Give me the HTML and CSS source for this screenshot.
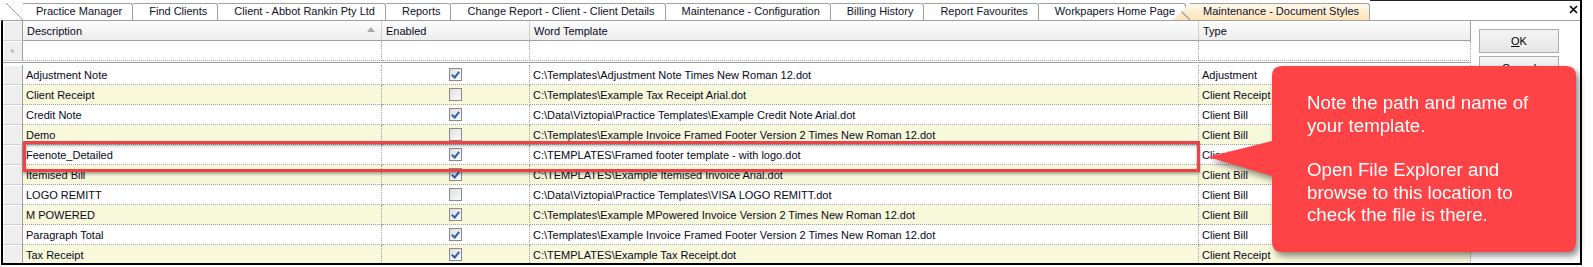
FILE: index.html
```html
<!DOCTYPE html>
<html>
<head>
<meta charset="utf-8">
<link rel="stylesheet" href="styles.css">
</head>
<body>
<div class="window">
  <div class="tabstrip">
    <div class="tab first">Practice Manager</div>
    <div class="tab">Find Clients</div>
    <div class="tab">Client - Abbot Rankin Pty Ltd</div>
    <div class="tab">Reports</div>
    <div class="tab">Change Report - Client - Client Details</div>
    <div class="tab">Maintenance - Configuration</div>
    <div class="tab">Billing History</div>
    <div class="tab">Report Favourites</div>
    <div class="tab">Workpapers Home Page</div>
    <div class="tab active">Maintenance - Document Styles</div>
    <div class="filler">
      <svg class="close" width="9" height="9" viewBox="0 0 9 9"><path d="M1 1L8 8M8 1L1 8" stroke="#000" stroke-width="1.6"/></svg>
    </div>
  </div>
  <div class="panel">
    <div class="grid">
      <div class="hdr">
        <div class="hc rh"></div>
        <div class="hc sort"><span>Description</span><svg width="8" height="5" viewBox="0 0 8 5"><path d="M0 5L4 0L8 5Z" fill="#a9a9a9"/></svg></div>
        <div class="hc">Enabled</div>
        <div class="hc">Word Template</div>
        <div class="hc last">Type</div>
      </div>
      <div class="row newrow">
        <div class="rh star">*</div>
        <div class="cell"></div>
        <div class="cell"></div>
        <div class="cell"></div>
        <div class="cell"></div>
      </div>
      <div class="spacer"></div>
      <div class="row">
        <div class="rh"></div>
        <div class="cell">Adjustment Note</div>
        <div class="cell chk"><span class="cb on"></span></div>
        <div class="cell">C:\Templates\Adjustment Note Times New Roman 12.dot</div>
        <div class="cell">Adjustment</div>
      </div>
      <div class="row alt">
        <div class="rh"></div>
        <div class="cell">Client Receipt</div>
        <div class="cell chk"><span class="cb"></span></div>
        <div class="cell">C:\Templates\Example Tax Receipt Arial.dot</div>
        <div class="cell">Client Receipt</div>
      </div>
      <div class="row">
        <div class="rh"></div>
        <div class="cell">Credit Note</div>
        <div class="cell chk"><span class="cb on"></span></div>
        <div class="cell">C:\Data\Viztopia\Practice Templates\Example Credit Note Arial.dot</div>
        <div class="cell">Client Bill</div>
      </div>
      <div class="row alt">
        <div class="rh"></div>
        <div class="cell">Demo</div>
        <div class="cell chk"><span class="cb"></span></div>
        <div class="cell">C:\Templates\Example Invoice Framed Footer Version 2 Times New Roman 12.dot</div>
        <div class="cell">Client Bill</div>
      </div>
      <div class="row">
        <div class="rh"></div>
        <div class="cell">Feenote_Detailed</div>
        <div class="cell chk"><span class="cb on"></span></div>
        <div class="cell">C:\TEMPLATES\Framed footer template - with logo.dot</div>
        <div class="cell">Client Bill</div>
      </div>
      <div class="row alt">
        <div class="rh"></div>
        <div class="cell">Itemised Bill</div>
        <div class="cell chk"><span class="cb on"></span></div>
        <div class="cell">C:\TEMPLATES\Example Itemised Invoice Arial.dot</div>
        <div class="cell">Client Bill</div>
      </div>
      <div class="row">
        <div class="rh"></div>
        <div class="cell">LOGO REMITT</div>
        <div class="cell chk"><span class="cb"></span></div>
        <div class="cell">C:\Data\Viztopia\Practice Templates\VISA LOGO REMITT.dot</div>
        <div class="cell">Client Bill</div>
      </div>
      <div class="row alt">
        <div class="rh"></div>
        <div class="cell">M POWERED</div>
        <div class="cell chk"><span class="cb on"></span></div>
        <div class="cell">C:\Templates\Example MPowered Invoice Version 2 Times New Roman 12.dot</div>
        <div class="cell">Client Bill</div>
      </div>
      <div class="row">
        <div class="rh"></div>
        <div class="cell">Paragraph Total</div>
        <div class="cell chk"><span class="cb on"></span></div>
        <div class="cell">C:\Templates\Example Invoice Framed Footer Version 2 Times New Roman 12.dot</div>
        <div class="cell">Client Bill</div>
      </div>
      <div class="row alt">
        <div class="rh"></div>
        <div class="cell">Tax Receipt</div>
        <div class="cell chk"><span class="cb on"></span></div>
        <div class="cell">C:\TEMPLATES\Example Tax Receipt.dot</div>
        <div class="cell">Client Receipt</div>
      </div>
    </div>
    <div class="side">
      <div class="btn"><u>O</u>K</div>
      <div class="btn">Cancel</div>
    </div>
  </div>
</div>

<div class="highlight"></div>

<div class="callout">
  <svg class="callout-bg" width="373" height="186" viewBox="0 0 373 186">
    <path d="M79 0H363Q373 0 373 10V176Q373 186 363 186H79Q69 186 69 176V110L5 91L69 75V10Q69 0 79 0Z" fill="#fd4346"/>
  </svg>
  <div class="callout-text">
    <p>Note the path and name of<br>your template.</p>
    <p>Open File Explorer and<br>browse to this location to<br>check the file is there.</p>
  </div>
</div>
</body>
</html>
```

FILE: styles.css
```css
* { box-sizing: border-box; }
html, body { margin: 0; padding: 0; }
body {
  width: 1593px;
  height: 267px;
  background: #fff;
  position: relative;
  overflow: hidden;
  font-family: "Liberation Sans", Arial, sans-serif;
  font-size: 11px;
  color: #08081c;
}

.window {
  width: 1582px;
  height: 265px;
  border-right: 2px solid #000;
  display: flex;
  flex-direction: column;
}

/* ---------- tabs ---------- */
.tabstrip {
  height: 20px;
  display: flex;
  align-items: flex-end;
  padding-left: 6px;
}
.tab {
  height: 17px;
  border-top: 1px solid #a0a0a0;
  border-right: 1px solid #a0a0a0;
  border-top-right-radius: 3px;
  padding: 0 10px 0 16px;
  line-height: 15px;
  white-space: nowrap;
  color: #10102a;
  background: #fff;
}
.tab.first {
  margin-left: 17px;
  padding-left: 13px;
  position: relative;
}
.tab.first::before {
  content: "";
  position: absolute;
  left: -17px;
  top: -1px;
  width: 17px;
  height: 17px;
  background: linear-gradient(to top right, transparent calc(50% - 0.7px), #a0a0a0 50%, transparent calc(50% + 0.7px));
}
.tab.active {
  position: relative;
  z-index: 1;
  margin-left: -13px;
  padding-left: 30px;
  background: linear-gradient(#fff8ec, #fde3b8);
  clip-path: polygon(0 100%, 17px 0, 100% 0, 100% 100%);
}
.tab.active::before {
  content: "";
  position: absolute;
  left: 0;
  top: -1px;
  width: 17px;
  height: 17px;
  background: linear-gradient(to top right, transparent calc(50% - 1.3px), #a0a0a0 50%, transparent calc(50% + 1.3px));
}
.filler {
  flex: 1;
  align-self: stretch;
  border-top: 1px solid #222;
  display: flex;
  justify-content: flex-end;
  padding: 4px 2px 0 0;
}
.close { display: block; }

/* ---------- panel ---------- */
.panel {
  flex: 1;
  margin-left: 1px;
  border-left: 2px solid #000;
  border-bottom: 2px solid #000;
  border-top: 1px solid #a0a0a0;
  display: flex;
  overflow: hidden;
}
.grid {
  width: 1468px;
  flex: none;
  display: flex;
  flex-direction: column;
  overflow: hidden;
}
.hdr, .row {
  display: grid;
  grid-template-columns: 20px 359px 148px 669px 272px;
  flex: none;
}
.hdr { height: 20px; }
.hc {
  background: linear-gradient(#fdfdfd, #ededed);
  border-right: 1px solid #cfcfcf;
  border-bottom: 1px solid #a0a0a0;
  padding-left: 4px;
  display: flex;
  align-items: center;
  white-space: nowrap;
}
.hc.rh { border-right: 1px solid #a0a0a0; padding: 0; }
.hc.last { border-right: 1px solid #a0a0a0; }
.hc.sort { justify-content: space-between; padding-right: 6px; }
.hc.sort svg { display: block; margin-top: -2px; }

.row { height: 20px; background: #fff; }
.row.alt { background: #f8f8da; }
.rh {
  background: #efefef;
  border-right: 1px solid #a0a0a0;
  border-bottom: 1px solid #d2d2d2;
  box-shadow: inset 1px 1px #fff;
}
.star {
  color: #a8a8a8;
  font-size: 11px;
  display: flex;
  align-items: center;
  justify-content: center;
  padding-top: 4px;
}
.cell {
  border-right: 1px dotted #a0a0a0;
  border-bottom: 1px dotted #a0a0a0;
  padding-left: 3px;
  display: flex;
  align-items: center;
  white-space: nowrap;
  overflow: hidden;
}
.cell.chk { justify-content: center; padding-left: 0; }
.spacer {
  height: 4px;
  flex: none;
  background: linear-gradient(#fff 0 1px, #a0a0a0 1px 2px, #fff 2px 4px);
}

.cb {
  width: 13px;
  height: 13px;
  border: 1px solid #8a8a8a;
  background: linear-gradient(135deg, #dedede, #fbfbfb);
  display: block;
  position: relative;
}
.cb.on::after {
  content: "";
  position: absolute;
  left: 3px;
  top: 1px;
  width: 3px;
  height: 6px;
  border-right: 2px solid #2f5fb0;
  border-bottom: 2px solid #2f5fb0;
  transform: rotate(40deg);
}

/* ---------- side buttons ---------- */
.side {
  flex: 1;
  padding: 8px 0 0 8px;
  display: flex;
  flex-direction: column;
  gap: 3px;
}
.btn {
  width: 80px;
  height: 24px;
  border: 1px solid #adadad;
  background: linear-gradient(#f4f4f4, #e7e7e7);
  display: flex;
  align-items: center;
  justify-content: center;
  color: #000;
}

/* ---------- overlays ---------- */
.highlight {
  position: absolute;
  left: 23px;
  top: 141px;
  width: 1177px;
  height: 31px;
  border: 3px solid #ee4249;
  box-shadow: 0 2px 3px rgba(0, 0, 0, 0.35), inset 0 2px 3px rgba(0, 0, 0, 0.3);
}
.callout {
  position: absolute;
  left: 1203px;
  top: 66px;
  width: 373px;
  height: 186px;
  filter: drop-shadow(3px 4px 3px rgba(0, 0, 0, 0.45));
}
.callout-bg { position: absolute; left: 0; top: 0; display: block; }
.callout-text {
  position: absolute;
  left: 104px;
  top: 26px;
  color: #fff;
  font-family: "Liberation Sans", Arial, sans-serif;
  font-size: 18.7px;
  line-height: 22.5px;
  white-space: nowrap;
}
.callout-text p { margin: 0 0 22px 0; }
```
